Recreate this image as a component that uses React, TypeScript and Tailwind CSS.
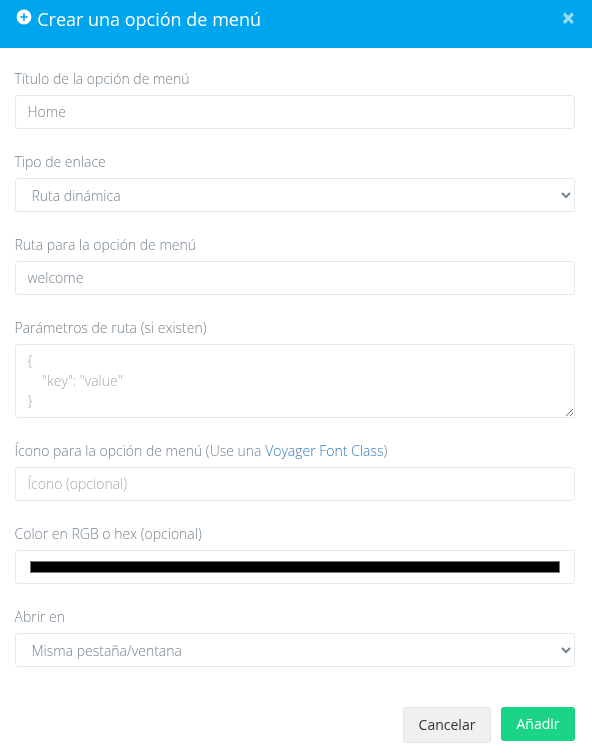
import React from 'react';

const box =
  'block w-full rounded-[3px] border border-[#e4eaec] bg-white px-3 text-sm font-light text-[#76838f] placeholder-[#a9a9a9] outline-none';

function Field({ label, children }: { label: React.ReactNode; children: React.ReactNode }) {
  return (
    <div className="mb-[23px]">
      <label className="mb-1.5 block h-5 text-sm leading-5 font-light text-[#76838f]">{label}</label>
      {children}
    </div>
  );
}

export default function App() {
  return (
    <div className="h-[756px] w-[592px] overflow-hidden bg-white font-['Open_Sans',sans-serif] will-change-transform">
      <header className="flex h-12 items-start bg-[#00a6ed] pr-[17px] pl-[15.7px] text-white">
        <svg className="mt-[8.7px] h-4 w-4" viewBox="0 0 16 16">
          <circle cx="8" cy="8" r="7.4" fill="#fff" />
          <path d="M8 4.2v7.6M4.2 8h7.6" stroke="#00a6ed" strokeWidth="1.6" />
        </svg>
        <h4 className="mt-[6px] ml-[5.5px] text-lg leading-[26px]">Crear una opción de menú</h4>
        <button className="mt-[7px] ml-auto text-[23px] leading-[21px] font-bold opacity-60 [text-shadow:0_1px_0_#fff]">
          ×
        </button>
      </header>
      <main className="pt-[21px] pr-[17.5px] pl-[14.5px]">
        <Field label="Título de la opción de menú">
          <input className={`${box} h-[34px] pb-0.5`} defaultValue="Home" />
        </Field>
        <Field label="Tipo de enlace">
          <select className={`${box} h-[34px]`}>
            <option>Ruta dinámica</option>
          </select>
        </Field>
        <Field label="Ruta para la opción de menú">
          <input className={`${box} h-[34px] pb-0.5`} defaultValue="welcome" />
        </Field>
        <Field label="Parámetros de ruta (si existen)">
          <textarea
            className={`${box} h-[74px] py-1.5 leading-5`}
            placeholder={'{\n    "key": "value"\n}'}
          />
        </Field>
        <Field
          label={
            <>
              Ícono para la opción de menú (Use una <a className="text-[#337ab7]">Voyager Font Class</a>)
            </>
          }
        >
          <input className={`${box} h-[34px] pb-0.5`} placeholder="Ícono (opcional)" />
        </Field>
        <Field label="Color en RGB o hex (opcional)">
          <input type="color" className={`${box} h-[34px] py-1.5`} />
        </Field>
        <Field label="Abrir en">
          <select className={`${box} h-[34px]`}>
            <option>Misma pestaña/ventana</option>
          </select>
        </Field>
      </main>
      <footer className="mt-[40px] flex justify-end gap-[10px] pr-[17px]">
        <button className="h-9 w-[88px] rounded-[3px] border border-[#e4e4e4] bg-[#f0f0f0] text-sm text-[#333]">Cancelar</button>
        <button className="h-[34px] w-[74px] rounded-[3px] bg-[#1bd488] text-sm text-white">Añadir</button>
      </footer>
    </div>
  );
}
